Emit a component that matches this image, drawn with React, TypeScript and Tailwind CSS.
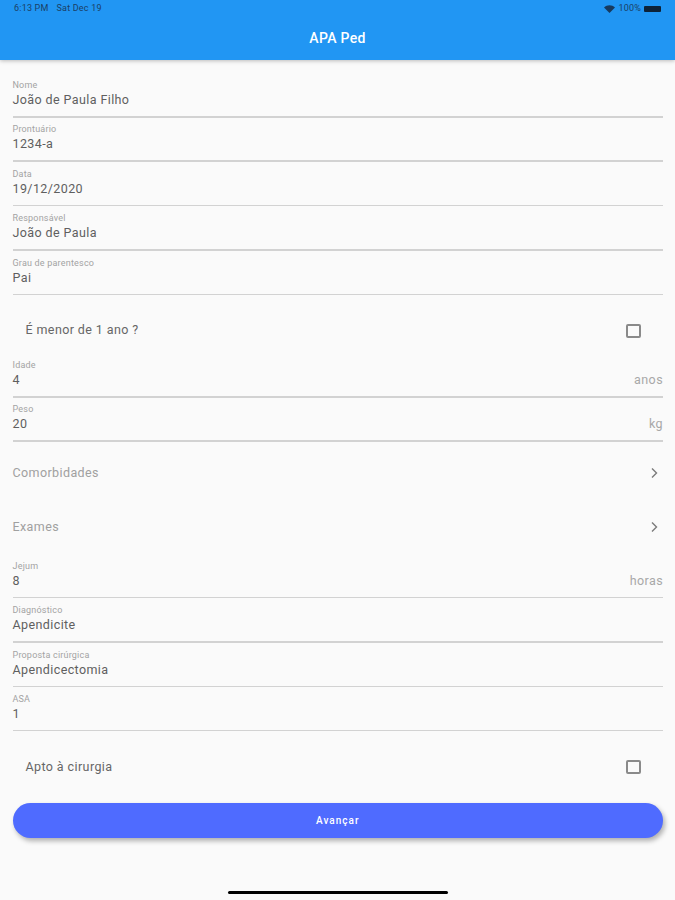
const FONT = "font-['Roboto','Liberation_Sans',sans-serif]";

function StatusBar() {
  return (
    <div className="flex h-[18px] items-center justify-between pl-[14px] pr-[14px] text-[9px] tracking-[0.2px] text-[#1b3f66]">
      <div className="flex gap-[8px]">
        <span>6:13 PM</span>
        <span>Sat Dec 19</span>
      </div>
      <div className="flex items-center gap-[3px]">
        <svg width="11" height="8" viewBox="0 0 11 8" aria-hidden>
          <path d="M0 2.4C3-.6 8-.6 11 2.4L5.5 8z" fill="#173a5e" />
        </svg>
        <span>100%</span>
        <div className="h-[6px] w-[17px] rounded-[1px] bg-[#0d2238]" />
      </div>
    </div>
  );
}

function Field({ label, value, suffix }: { label: string; value: string; suffix?: string }) {
  return (
    <div className="flex h-[44.4px] flex-col justify-end">
      <div className="text-[9px] leading-[11px] tracking-[0.2px] text-[#a3a3a3]">{label}</div>
      <div className="flex items-baseline justify-between pb-[9px] pt-[1px] text-[12.5px] leading-[15px] tracking-[0.4px] text-[#5f5f5f]">
        <span>{value}</span>
        {suffix && <span className="text-[#a8a8a8]">{suffix}</span>}
      </div>
      <div className="h-[1.5px] bg-[#d2d2d2]" />
    </div>
  );
}

function CheckRow({ label, className }: { label: string; className: string }) {
  return (
    <div className={`flex items-center justify-between pl-[13px] pr-[22px] ${className}`}>
      <span className="text-[12.5px] tracking-[0.4px] text-[#666666]">{label}</span>
      <div className="h-[14px] w-[15px] rounded-[2px] border-2 border-[#8a8a8a]" />
    </div>
  );
}

function NavRow({ label }: { label: string }) {
  return (
    <div className="flex h-[54px] items-center justify-between pr-[3px]">
      <span className="text-[12.5px] tracking-[0.4px] text-[#a0a0a0]">{label}</span>
      <svg width="12" height="12" viewBox="0 0 12 12" fill="none" stroke="#7a7a7a" strokeWidth="1.4" aria-hidden>
        <path d="M4 1.5 8.5 6 4 10.5" />
      </svg>
    </div>
  );
}

export default function App() {
  return (
    <div className={`relative flex h-[900px] w-[675px] flex-col overflow-hidden bg-[#fafafa] ${FONT}`}>
      <header className="h-[60px] bg-[#2196f3] shadow-[0_1px_4px_rgba(0,0,0,0.25)]">
        <StatusBar />
        <div className="flex h-[42px] items-center justify-center pb-[1px] text-[14px] font-medium tracking-[0.3px] text-white">
          APA Ped
        </div>
      </header>

      <main className="flex flex-col px-[13px] pl-[12.5px] pr-[12px] pt-[13.2px]">
        <Field label="Nome" value="João de Paula Filho" />
        <Field label="Prontuário" value="1234-a" />
        <Field label="Data" value="19/12/2020" />
        <Field label="Responsável" value="João de Paula" />
        <Field label="Grau de parentesco" value="Pai" />
        <CheckRow label="É menor de 1 ano ?" className="h-[58px] pt-[13px]" />
        <Field label="Idade" value="4" suffix="anos" />
        <Field label="Peso" value="20" suffix="kg" />
        <div className="mt-[4px]">
          <NavRow label="Comorbidades" />
          <NavRow label="Exames" />
        </div>
        <Field label="Jejum" value="8" suffix="horas" />
        <Field label="Diagnóstico" value="Apendicite" />
        <Field label="Proposta cirúrgica" value="Apendicectomia" />
        <Field label="ASA" value="1" />
        <CheckRow label="Apto à cirurgia" className="h-[72px]" />
        <button className="h-[35px] rounded-full bg-[#4f6bff] text-[10px] font-medium tracking-[1px] text-white shadow-[2px_3px_5px_rgba(0,0,0,0.3)]">
          Avançar
        </button>
      </main>

      <div className="absolute bottom-[6px] left-[228px] h-[3px] w-[220px] rounded-full bg-black" />
    </div>
  );
}
